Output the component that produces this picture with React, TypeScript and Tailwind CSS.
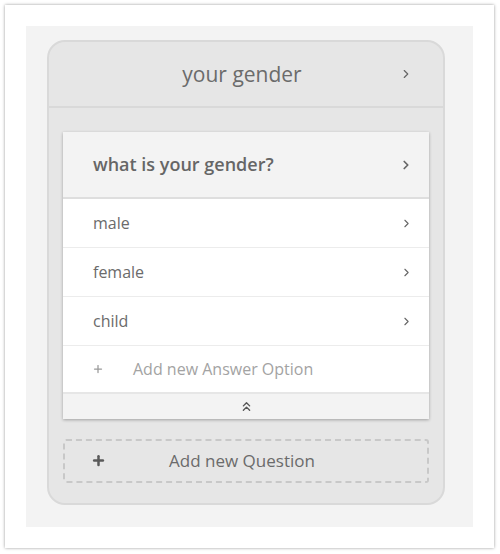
import { ChevronRight, ChevronsUp, Plus } from "lucide-react";

const answers = ["male", "female", "child"];

export default function App() {
  return (
    <div className="w-[500px] h-[554px] bg-white pl-[5px] pt-[5px] font-['Open_Sans',sans-serif]">
      <div className="w-[489px] h-[543px] bg-white shadow-[0_0_3px_rgba(0,0,0,0.4)] pl-[21px] pt-[21px]">
        <div className="w-[447px] h-[501px] bg-[#f3f3f3] pl-[21px] pt-[14px]">
          <div className="w-[398px] bg-[#e6e6e6] border-2 border-[#d9d9d9] rounded-[18px] flex flex-col pb-[20px]">
            <div className="h-[66px] shrink-0 border-b-2 border-[#d9d9d9] relative flex items-center justify-center pr-[8px] pt-[2px]">
              <span className="text-[21px] text-[#6b6b6b]">your gender</span>
              <ChevronRight className="absolute right-[30px] top-[25px] text-[#666]" size={14} strokeWidth={2} />
            </div>
            <div className="px-[14px] pt-[24px]">
              <div className="bg-white shadow-[0_1px_3px_rgba(0,0,0,0.3)]">
                <div className="h-[67px] bg-[#f3f3f3] border-b-2 border-[#dedede] flex items-center justify-between pl-[30px] pr-[16px]">
                  <span className="text-[18px] font-semibold text-[#666]">what is your gender?</span>
                  <ChevronRight className="text-[#666]" size={14} strokeWidth={3} />
                </div>
                {answers.map((a) => (
                  <div
                    key={a}
                    className="h-[49px] border-b border-[#ececec] flex items-center justify-between pl-[30px] pr-[16px]"
                  >
                    <span className="text-[16px] text-[#6b6b6b]">{a}</span>
                    <ChevronRight className="text-[#666]" size={13} strokeWidth={2} />
                  </div>
                ))}
                <div className="h-[48px] border-b-2 border-[#e6e6e6] flex items-center pl-[29px]">
                  <Plus className="text-[#999]" size={12} strokeWidth={2.5} />
                  <span className="ml-[29px] text-[16px] text-[#a3a3a3]">Add new Answer Option</span>
                </div>
                <div className="h-[25px] bg-[#f3f3f3] flex items-center justify-center">
                  <ChevronsUp className="text-[#555]" size={15} strokeWidth={2.2} />
                </div>
              </div>
              <div className="mt-[20px] h-[44px] border-2 border-dashed border-[#c8c8c8] rounded-[3px] relative flex items-center justify-center pr-[8px]">
                <Plus className="absolute left-[26px] top-[12px] text-[#5a5a5a]" size={15} strokeWidth={4} />
                <span className="text-[17px] text-[#6b6b6b]">Add new Question</span>
              </div>
            </div>
          </div>
        </div>
      </div>
    </div>
  );
}
